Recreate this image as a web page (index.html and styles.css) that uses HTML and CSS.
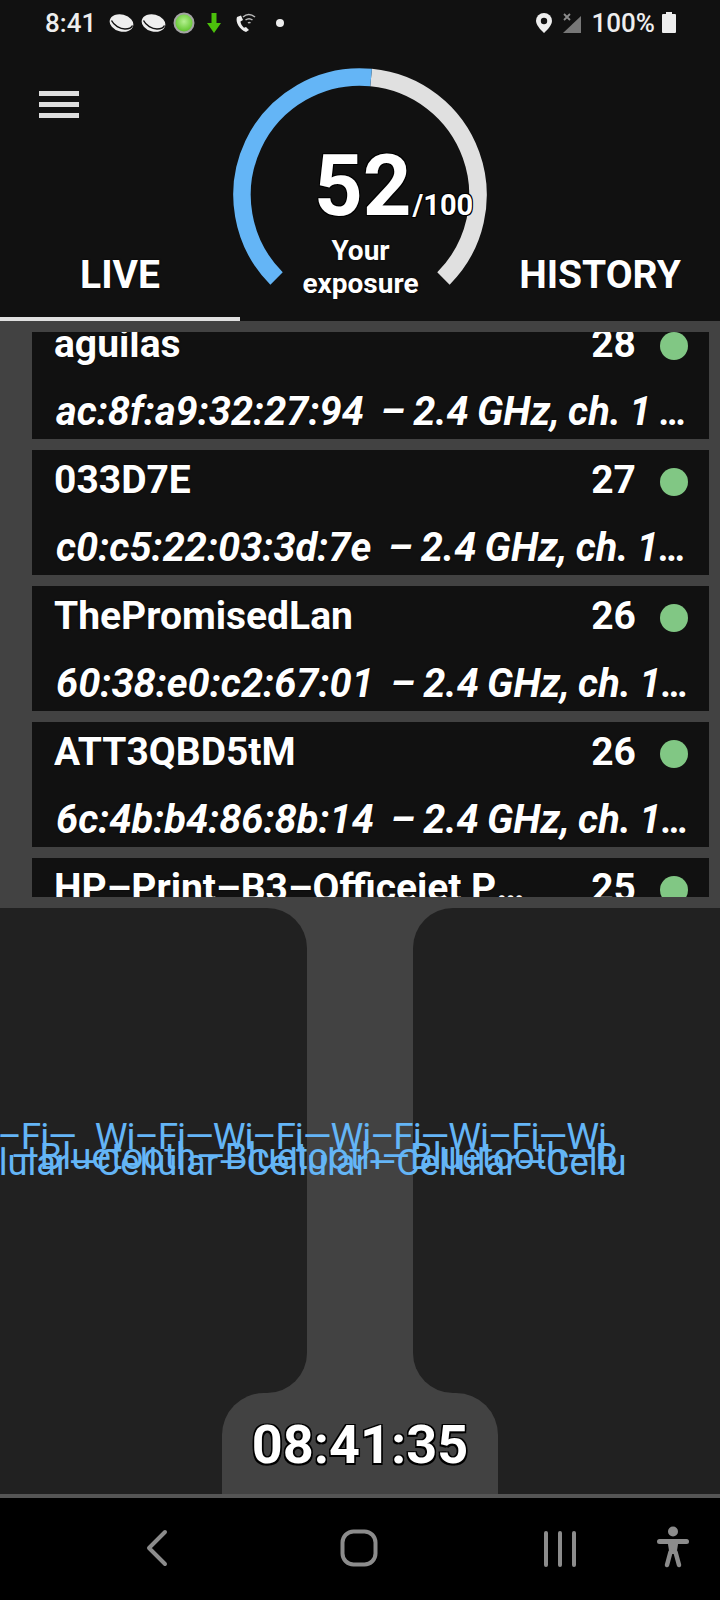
FILE: index.html
```html
<!DOCTYPE html>
<html>
<head>
  <meta charset="utf-8">
  <title>Exposure</title>
  <meta name="viewport" content="width=device-width, initial-scale=1.0">
  <link rel="stylesheet" href="styles.css">
</head>
<body>
  <div class="screen">
    <!-- status bar -->
    <div class="status-bar">
      <span class="clock">8:41</span>
      <svg class="st-planet" width="25" height="18" viewBox="0 0 25 18"><ellipse cx="12.500" cy="9" rx="12" ry="8.500" transform="rotate(14 12.500 9)" fill="#eee"/><path d="M2.500 6.500C5 11.500 11 15 16 15c3.500 0 6.500-1 7.500-3.500" fill="none" stroke="#111" stroke-width="1.400"/></svg>
      <svg class="st-planet st-planet-2" width="25" height="18" viewBox="0 0 25 18"><ellipse cx="12.500" cy="9" rx="12" ry="8.500" transform="rotate(14 12.500 9)" fill="#eee"/><path d="M2.500 6.500C5 11.500 11 15 16 15c3.500 0 6.500-1 7.500-3.500" fill="none" stroke="#111" stroke-width="1.400"/></svg>
      <svg class="st-led" width="22" height="22" viewBox="0 0 22 22">
        <defs><radialGradient id="led" cx="50%" cy="42%" r="55%"><stop offset="0" stop-color="#b4f090"/><stop offset="1" stop-color="#5ec42a"/></radialGradient></defs>
        <circle cx="11" cy="11" r="9.500" fill="url(#led)" stroke="#a4a4a4" stroke-width="2"/>
      </svg>
      <svg class="st-arrow" width="14" height="20" viewBox="0 0 14 20"><path d="M4.500 0h5v10H14l-7 10-7-10h4.500z" fill="#4cc00c"/></svg>
      <svg class="st-call" width="21" height="20" viewBox="0 0 21 20"><path d="M2 4C0 9 5 17 11 19l3-2-3-3-2 .8C7 13 5.500 10.500 5.500 8.500L8 7 6 2.500z" fill="#eee"/><path d="M8 4c3.500-3.200 8-3.200 12 0M10.500 7c2.200-1.700 4.800-1.700 7 0M13 10c.8-.6 1.700-.6 2.500 0" fill="none" stroke="#bbb" stroke-width="1.500"/></svg>
      <span class="st-dot"></span>
      <span class="st-spacer"></span>
      <svg class="st-pin" width="16" height="20" viewBox="0 0 16 20"><path d="M8 0a8 8 0 0 0-8 8c0 5 8 12 8 12s8-7 8-12a8 8 0 0 0-8-8z" fill="#eee"/><circle cx="8" cy="8" r="3.200" fill="#111"/></svg>
      <svg class="st-signal" width="18" height="20" viewBox="0 0 18 20"><path d="M18 3v17H0z" fill="#777"/><path d="M1 1l6 6M7 1L1 7" stroke="#8c8c8c" stroke-width="1.800"/></svg>
      <span class="battery-pct">100%</span>
      <svg class="st-battery" width="14" height="21" viewBox="0 0 14 21"><path d="M4 0h6v2h3a1 1 0 0 1 1 1v17a1 1 0 0 1-1 1H1a1 1 0 0 1-1-1V3a1 1 0 0 1 1-1h3z" fill="#eee"/></svg>
    </div>

    <!-- header with gauge -->
    <div class="header">
      <div class="menu-btn"><span></span><span></span><span></span></div>
      <div class="tabs">
        <div class="tab active">LIVE</div>
        <div class="tab">HISTORY</div>
      </div>
      <div class="gauge">
        <svg width="260" height="260" viewBox="0 0 260 260">
          <path class="gauge-rest" d="M213.440 213.440A118 118 0 0 0 141.100 12.520"/>
          <path class="gauge-value" d="M46.560 213.440A118 118 0 0 1 141.100 12.520"/>
        </svg>
        <div class="score"><span class="score-num">52</span><span class="score-max">/100</span></div>
        <div class="score-label">Your<br>exposure</div>
      </div>
    </div>

    <!-- networks -->
    <div class="list-wrap">
      <div class="list">
        <div class="net-card">
          <div class="net-top"><span class="net-name">aguilas</span><span class="net-score">28</span><span class="net-dot"></span></div>
          <div class="net-info">ac:8f:a9:32:27:94&nbsp; – 2.4 GHz, ch. 1 <span class="dots">…</span></div>
        </div>
        <div class="net-card">
          <div class="net-top"><span class="net-name">033D7E</span><span class="net-score">27</span><span class="net-dot"></span></div>
          <div class="net-info">c0:c5:22:03:3d:7e&nbsp; – 2.4 GHz, ch. 1<span class="dots">…</span></div>
        </div>
        <div class="net-card">
          <div class="net-top"><span class="net-name">ThePromisedLan</span><span class="net-score">26</span><span class="net-dot"></span></div>
          <div class="net-info">60:38:e0:c2:67:01&nbsp; – 2.4 GHz, ch. 1<span class="dots">…</span></div>
        </div>
        <div class="net-card">
          <div class="net-top"><span class="net-name">ATT3QBD5tM</span><span class="net-score">26</span><span class="net-dot"></span></div>
          <div class="net-info">6c:4b:b4:86:8b:14&nbsp; – 2.4 GHz, ch. 1<span class="dots">…</span></div>
        </div>
        <div class="net-card">
          <div class="net-top"><span class="net-name">HP–Print–B3–Officejet P<span class="dots">…</span></span><span class="net-score">25</span><span class="net-dot"></span></div>
          <div class="net-info">&nbsp;</div>
        </div>
      </div>
    </div>

    <!-- radar area -->
    <div class="stage">
      <div class="stage-panels">
        <div class="panel"></div>
        <div class="panel panel-right"></div>
      </div>
      <div class="stage-foot">
        <div class="time-tab">08:41:35</div>
      </div>
      <div class="ticker ticker-wifi"><span class="ticker-a">Wi–Fi—</span><span class="ticker-b">Wi–Fi—Wi–Fi—Wi–Fi—Wi–Fi—Wi</span></div>
      <div class="ticker ticker-bt">—Bluetooth—Bluetooth—Bluetooth—B</div>
      <div class="ticker ticker-cell">Cellular—Cellular—Cellular—Cellular—Cellu</div>
    </div>

    <!-- android nav -->
    <div class="nav-bar">
      <svg class="nav-back" width="24" height="38" viewBox="0 0 24 38"><path d="M20 3L4 19l16 16" fill="none" stroke="#8c8c8c" stroke-width="4" stroke-linecap="round" stroke-linejoin="round"/></svg>
      <svg class="nav-home" width="38" height="38" viewBox="0 0 38 38"><rect x="2.500" y="2.500" width="33" height="33" rx="11" fill="none" stroke="#8c8c8c" stroke-width="4"/></svg>
      <svg class="nav-recent" width="34" height="36" viewBox="0 0 34 36"><path d="M3 2v32M17 2v32M31 2v32" fill="none" stroke="#8c8c8c" stroke-width="4" stroke-linecap="round"/></svg>
      <svg class="nav-access" width="36" height="44" viewBox="0 0 36 44"><circle cx="17" cy="6.500" r="5" fill="#8c8c8c"/><path d="M3.500 16.500h27" fill="none" stroke="#8c8c8c" stroke-width="5" stroke-linecap="round"/><path d="M11.500 16h11l-2 13h-7z" fill="#8c8c8c"/><path d="M14.500 27l-3.500 13M19.500 27l3.500 13" fill="none" stroke="#8c8c8c" stroke-width="4.500" stroke-linecap="round"/></svg>
    </div>
  </div>
</body>
</html>
```

FILE: styles.css
```css
* {
  margin: 0;
  padding: 0;
  box-sizing: border-box;
}

body {
  width: 720px;
  height: 1600px;
  overflow: hidden;
  background: #000;
  font-family: Roboto, "Liberation Sans", sans-serif;
  color: #fff;
}

.screen {
  width: 720px;
  height: 1600px;
  display: flex;
  flex-direction: column;
}

.status-bar {
  height: 45px;
  padding: 0 44px 0 45px;
  display: flex;
  align-items: center;
  background: #111;
  color: #eee;
  font-size: 26px;
  font-weight: 500;
}

.status-bar svg {
  flex: none;
}

.clock {
  width: 49px;
}

.st-planet {
  margin-left: 15px;
}

.st-planet-2 {
  margin-left: 7px;
}

.st-led {
  margin-left: 7px;
}

.st-arrow {
  margin-left: 12px;
}

.st-call {
  margin-left: 14px;
}

.st-dot {
  width: 8px;
  height: 8px;
  margin-left: 20px;
  border-radius: 50%;
  background: #eee;
}

.st-spacer {
  flex: 1;
}

.st-signal {
  margin-left: 11px;
  margin-right: 11px;
}

.battery-pct {
  margin-right: 7px;
}

.header {
  position: relative;
  height: 276px;
  background: #111;
  flex: none;
}

.menu-btn {
  position: absolute;
  top: 46px;
  left: 39px;
  width: 40px;
  display: flex;
  flex-direction: column;
  gap: 6px;
}

.menu-btn span {
  height: 5px;
  background: #ddd;
}

.tabs {
  position: absolute;
  left: 0;
  right: 0;
  bottom: 0;
  display: flex;
  justify-content: space-between;
}

.tab {
  width: 240px;
  height: 76px;
  padding-top: 5px;
  text-align: center;
  font-size: 39px;
  font-weight: 700;
  line-height: 50px;
  text-shadow: 0 0 2px #000;
}

.tab.active {
  border-bottom: 4px solid #e0e0e0;
}

.gauge {
  position: absolute;
  left: 230px;
  top: 20px;
  width: 260px;
  height: 260px;
  text-align: center;
}

.gauge svg {
  position: absolute;
  left: 0;
  top: 0;
}

.gauge-rest,
.gauge-value {
  fill: none;
  stroke-width: 17.500;
}

.gauge-rest {
  stroke: #e0e0e0;
}

.gauge-value {
  stroke: #64b5f6;
}

.score {
  position: absolute;
  left: 84px;
  top: 71px;
  white-space: nowrap;
  line-height: 100px;
  text-shadow: -1px -1px 0 #000, 1px -1px 0 #000, -1px 1px 0 #000, 1px 1px 0 #000;
}

.score-num {
  font-size: 85px;
  font-weight: 700;
}

.score-max {
  margin-left: 1px;
  font-size: 29px;
  font-weight: 700;
}

.score-label {
  position: absolute;
  left: 1px;
  right: 0;
  top: 169px;
  font-size: 28px;
  font-weight: 700;
  line-height: 33px;
  text-shadow: 0 0 2px #000;
}

.list-wrap {
  flex: none;
  height: 587px;
  padding: 11px 11px 0 32px;
  background: #424242;
}

.list {
  height: 565px;
  overflow: hidden;
}

.net-card {
  height: 125px;
  margin-bottom: 11px;
  padding: 4px 21px 0 22px;
  background: #111;
  text-shadow: 0 0 2px #000;
}

.net-card:first-child {
  margin-top: -18px;
}

.net-top {
  display: flex;
  align-items: center;
  height: 54px;
  font-size: 39px;
  font-weight: 700;
}

.net-name {
  flex: 1;
  padding-bottom: 3px;
  white-space: nowrap;
  overflow: hidden;
}

.net-score {
  width: 50px;
  padding-bottom: 3px;
  text-align: right;
}

.net-dot {
  width: 28px;
  height: 28px;
  margin: 2px 0 0 24px;
  border-radius: 50%;
  background: #81c784;
  flex: none;
}

.net-info {
  margin: 15px 0 0 2px;
  font-size: 39.800px;
  font-weight: 700;
  font-style: italic;
  line-height: 50px;
  word-spacing: -1.500px;
  white-space: nowrap;
}

.dots {
  font-size: 38px;
}

.stage {
  position: relative;
  flex: none;
  height: 590px;
  background: #424242;
  overflow: hidden;
  border-bottom: 4px solid #555;
}

.stage-panels {
  height: 485px;
  display: flex;
  justify-content: space-between;
  background: #424242;
}

.panel {
  width: 307px;
  background: #212121;
  border-radius: 0 40px 40px 0;
}

.panel-right {
  border-radius: 40px 0 0 40px;
}

.stage-foot {
  height: 101px;
  display: flex;
  justify-content: center;
  background: #212121;
}

.time-tab {
  width: 276px;
  padding-top: 2px;
  border-radius: 42px 42px 0 0;
  background: #424242;
  text-align: center;
  font-size: 54px;
  font-weight: 700;
  line-height: 100px;
  text-shadow: -1.500px -1.500px 0 #000, 1.500px -1.500px 0 #000, -1.500px 1.500px 0 #000, 1.500px 1.500px 0 #000;
}

.ticker {
  position: absolute;
  white-space: nowrap;
  line-height: 40px;
  color: #64b5f6;
}

.ticker-wifi {
  top: 209px;
  left: -42px;
  font-size: 37px;
  letter-spacing: -1.100px;
}

.ticker-b {
  margin-left: 19px;
}

.ticker-bt {
  top: 229px;
  left: 11px;
  font-size: 36.600px;
}

.ticker-cell {
  top: 235px;
  left: -53px;
  font-size: 36.300px;
}

.nav-bar {
  flex: 1;
  position: relative;
  background: #000;
}

.nav-bar svg {
  position: absolute;
}

.nav-back {
  left: 145px;
  top: 31px;
}

.nav-home {
  left: 340px;
  top: 31px;
}

.nav-recent {
  left: 543px;
  top: 33px;
}

.nav-access {
  left: 656px;
  top: 27px;
}
```
